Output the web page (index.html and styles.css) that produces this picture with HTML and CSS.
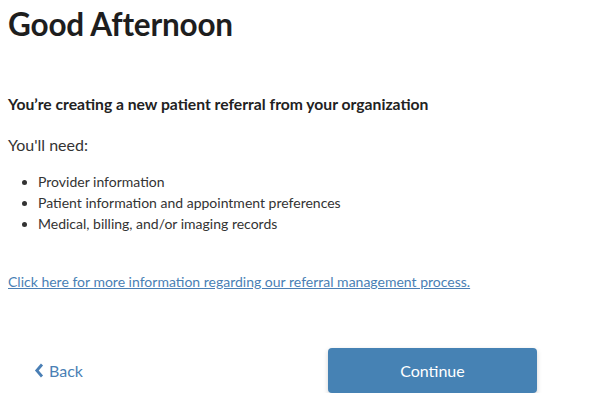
FILE: index.html
```html
<!DOCTYPE html>
<html>
<head>
<meta charset="utf-8">
<link rel="stylesheet" href="styles.css">
</head>
<body>
<div class="page">
  <h1 class="greeting">Good Afternoon</h1>
  <h2 class="lead">You’re creating a new patient referral from your organization</h2>
  <p class="need">You'll need:</p>
  <ul class="items">
    <li>Provider information</li>
    <li>Patient information and appointment preferences</li>
    <li>Medical, billing, and/or imaging records</li>
  </ul>
  <a class="info-link" href="#">Click here for more information regarding our referral management process.</a>
  <div class="actions">
    <a class="back" href="#"><svg class="chev" width="10" height="15" viewBox="0 0 10 15"><path d="M8 1.5 L2.8 7.5 L8 13.5" fill="none" stroke="#4a7fb5" stroke-width="2.8"/></svg>Back</a>
    <button class="continue">Continue</button>
  </div>
</div>
</body>
</html>
```

FILE: styles.css
```css
html, body { margin: 0; padding: 0; background: #fff; }
body { font-family: "Lato", "Open Sans", sans-serif; color: #222; }
.page { padding: 0 8px; }
.greeting {
  margin: 0;
  padding-top: 4px;
  font-size: 31.5px;
  font-weight: 700;
  color: #1e1e1e;
  line-height: 40px;
  letter-spacing: -0.2px;
}
.lead {
  margin: 50px 0 0;
  font-size: 15.7px;
  font-weight: 700;
  color: #222;
  line-height: 20px;
}
.need {
  margin: 21px 0 0;
  font-size: 16px;
  color: #333;
  line-height: 20px;
}
.items {
  margin: 16px 0 0;
  padding-left: 30px;
  font-size: 14px;
  color: #333;
  line-height: 21px;
}
.info-link {
  display: block;
  margin-top: 38px;
  font-size: 14px;
  color: #4a7fb5;
  text-decoration: underline;
  line-height: 20px;
}
.actions {
  display: flex;
  align-items: center;
  margin-top: 56px;
}
.back {
  display: flex;
  align-items: center;
  gap: 5px;
  margin-left: 26px;
  font-size: 16px;
  color: #4a7fb5;
  text-decoration: none;
}
.continue {
  margin-left: 245px;
  width: 209px;
  height: 45px;
  border: 0;
  border-radius: 4px;
  background: #4682b4;
  color: #fff;
  font-family: "Lato", "Open Sans", sans-serif;
  font-size: 16px;
  box-shadow: 0 2px 5px rgba(0,0,0,0.18);
}
```
